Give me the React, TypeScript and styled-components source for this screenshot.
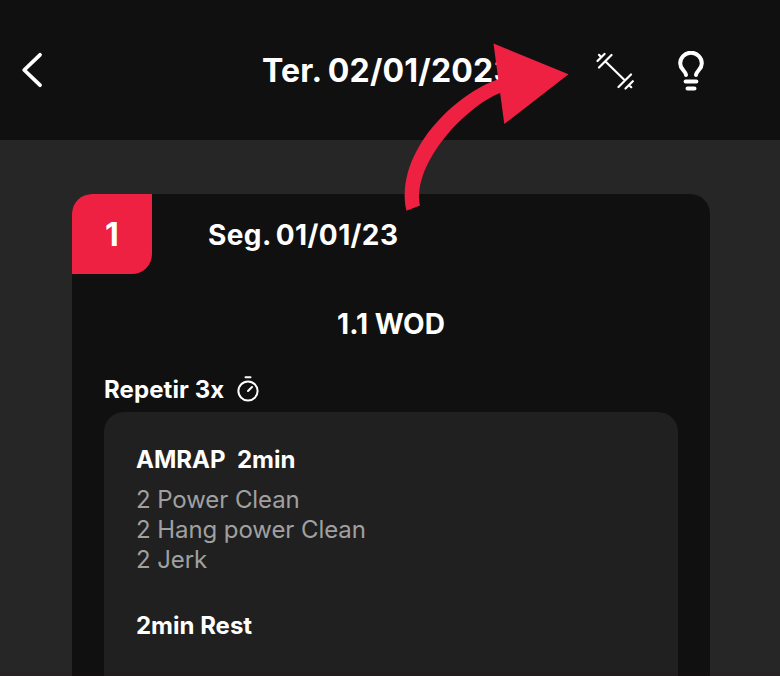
import React from "react";
import styled, { createGlobalStyle } from "styled-components";

const GlobalStyle = createGlobalStyle`
  * { box-sizing: border-box; }
  body { margin: 0; background: #262626; overflow: hidden; }
`;

const Screen = styled.div`
  position: relative;
  display: flex;
  flex-direction: column;
  width: 780px;
  height: 676px;
  overflow: hidden;
  background: #262626;
  color: #fff;
  font-family: Inter, sans-serif;
`;

const TopBar = styled.header`
  display: grid;
  grid-template-columns: 262px 334px 81px 1fr;
  align-items: center;
  flex: none;
  height: 140px;
  background: #101010;
`;

const IconButton = styled.button<{ $inset?: number; $drop?: number }>`
  display: flex;
  padding: ${(p) => p.$drop ?? 0}px 0 0 ${(p) => p.$inset ?? 0}px;
  border: 0;
  background: none;
  color: inherit;
`;

const Title = styled.h1`
  margin: 0;
  padding-top: 1px;
  font-size: 32px;
  line-height: 40px;
  font-weight: 700;
  letter-spacing: 0.2px;
  word-spacing: -1.4px;
  white-space: nowrap;
`;

const Card = styled.main`
  display: flex;
  flex-direction: column;
  flex: 1;
  min-height: 0;
  margin: 54px 70px 0 72px;
  border-radius: 20px 20px 0 0;
  background: #101010;
`;

const CardHeader = styled.div`
  display: flex;
  gap: 56px;
  height: 80px;
`;

const Badge = styled.div`
  display: flex;
  align-items: center;
  justify-content: center;
  width: 80px;
  height: 80px;
  border-radius: 20px 0;
  background: #ee2143;
  font-size: 32px;
  font-weight: 700;
`;

const DateLabel = styled.h2`
  margin: 0;
  font-size: 28px;
  line-height: 82px;
  font-weight: 700;
  letter-spacing: 0.4px;
  word-spacing: -2px;
`;

const WodTitle = styled.h3`
  margin: 33px 0 0;
  font-size: 28px;
  line-height: 34px;
  font-weight: 700;
  text-align: center;
`;

const Repeat = styled.div`
  display: flex;
  align-items: center;
  gap: 12px;
  height: 30px;
  margin: 33px 0 8px 32px;
  font-size: 24px;
  font-weight: 700;
  letter-spacing: 0.1px;
`;

const Panel = styled.section`
  flex: 1;
  margin: 0 32px;
  padding: 33px 32px 0;
  border-radius: 20px 20px 0 0;
  background: #202020;
  font-size: 24px;
  line-height: 30px;
`;

const Heading = styled.h4`
  margin: 0;
  font-size: 24px;
  font-weight: 700;
  white-space: pre;
`;

const Exercises = styled.ul`
  margin: 10px 0 36px;
  padding: 0;
  list-style: none;
  font-weight: 400;
  letter-spacing: -0.08px;
  color: #a0a0a0;
`;

const Pointer = styled.svg`
  position: absolute;
  left: 390px;
  top: 30px;
`;

const BottomEdge = styled.div`
  position: absolute;
  inset: auto 0 0;
  height: 4px;
  background: rgba(50, 0, 12, 0.1);
`;

const strokeProps = { fill: "none", stroke: "#fff", strokeLinecap: "round", strokeLinejoin: "round" } as const;

const BackIcon = () => (
  <svg width="28" height="40" viewBox="0 0 28 40">
    <path {...strokeProps} strokeWidth="3.8" d="M20 4.8 4.2 20 20 35.2" />
  </svg>
);

const BarbellIcon = () => (
  <svg width="40" height="40" viewBox="0 0 40 40">
    <g {...strokeProps} strokeWidth="2.2">
      <path d="M10 12 29 30.5M3 17.5 15.5 5M1.5 11 8.5 3.9M3 4.8 5 7M22.5 37 35 24.5M29.5 38.5 36.8 31.2M33 35 35.2 37.2" />
    </g>
  </svg>
);

const BulbIcon = () => (
  <svg width="28" height="42" viewBox="0 0 28 42">
    <g {...strokeProps} strokeWidth="4">
      <path d="M9 23.9C8.3 19.5 3.2 18.3 3.2 12.5a10.8 10.8 0 0 1 21.6 0c0 5.8-5.1 7-5.8 11.4" />
      <path d="M8.6 30.6h10.8M10.5 37.6h7" />
    </g>
  </svg>
);

const TimerIcon = () => (
  <svg width="24" height="28" viewBox="0 0 24 28">
    <g {...strokeProps} strokeWidth="2">
      <circle cx="12" cy="16" r="9.6" />
      <path d="M9.5 2.3h5M12 16l4-4" />
    </g>
  </svg>
);

const exercises = ["2 Power Clean", "2 Hang power Clean", "2 Jerk"];

export default function App() {
  return (
    <>
      <GlobalStyle />
      <Screen>
        <TopBar>
          <IconButton $inset={20} aria-label="Voltar"><BackIcon /></IconButton>
          <Title>Ter. 02/01/2023</Title>
          <IconButton aria-label="Treino"><BarbellIcon /></IconButton>
          <IconButton $drop={4} aria-label="Dicas"><BulbIcon /></IconButton>
        </TopBar>
        <Card>
          <CardHeader>
            <Badge>1</Badge>
            <DateLabel>Seg. 01/01/23</DateLabel>
          </CardHeader>
          <WodTitle>1.1 WOD</WodTitle>
          <Repeat>Repetir 3x <TimerIcon /></Repeat>
          <Panel>
            <Heading>{"AMRAP  2min"}</Heading>
            <Exercises>
              {exercises.map((exercise) => <li key={exercise}>{exercise}</li>)}
            </Exercises>
            <Heading>2min Rest</Heading>
          </Panel>
        </Card>
        <Pointer width="190" height="190" viewBox="0 0 190 190" aria-hidden="true">
          <path d="M16.5 180.7C4 122 66 63 109 49L111 62.5C76 76 22 133 30 175.5Z" fill="#ee2143" />
          <path d="M103.5 13.5 178.5 44.3 114.3 94Z" fill="#ee2143" />
        </Pointer>
        <BottomEdge />
      </Screen>
    </>
  );
}
